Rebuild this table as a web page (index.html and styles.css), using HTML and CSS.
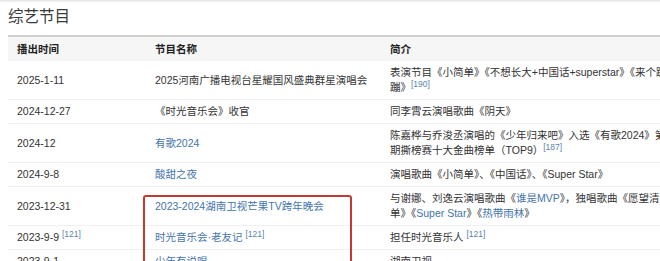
FILE: index.html
```html
<!DOCTYPE html>
<html lang="zh">
<head>
<meta charset="utf-8">
<link rel="stylesheet" href="styles.css">
</head>
<body>
<div class="shadow"></div>
<div class="page">
  <h2 class="title">综艺节目</h2>
  <table class="tbl">
    <colgroup><col class="c1"><col class="c2"><col class="c3"></colgroup>
    <thead>
      <tr><th>播出时间</th><th>节目名称</th><th>简介</th></tr>
    </thead>
    <tbody>
      <tr class="two">
        <td>2025-1-11</td>
        <td>2025河南广播电视台星耀国风盛典群星演唱会</td>
        <td>表演节目《小简单》《不想长大+中国话+superstar》《来个蹦<br>蹦》<sup>[190]</sup></td>
      </tr>
      <tr>
        <td>2024-12-27</td>
        <td>《时光音乐会》收官</td>
        <td>同李霄云演唱歌曲《阴天》</td>
      </tr>
      <tr class="two">
        <td>2024-12</td>
        <td><a>有歌2024</a></td>
        <td>陈嘉桦与乔浚丞演唱的《少年归来吧》入选《有歌2024》第八<br>期撕榜赛十大金曲榜单（TOP9）<sup>[187]</sup></td>
      </tr>
      <tr>
        <td>2024-9-8</td>
        <td><a>酸甜之夜</a></td>
        <td>演唱歌曲《小简单》、《中国话》、《Super Star》</td>
      </tr>
      <tr class="two">
        <td>2023-12-31</td>
        <td><a>2023-2024湖南卫视芒果TV跨年晚会</a></td>
        <td>与谢娜、刘逸云演唱歌曲《<a>谁是MVP</a>》，独唱歌曲《愿望清<br>单》《<a>Super Star</a>》《<a>热带雨林</a>》</td>
      </tr>
      <tr>
        <td>2023-9-9 <sup>[121]</sup></td>
        <td><a>时光音乐会·老友记</a> <sup>[121]</sup></td>
        <td>担任时光音乐人 <sup>[121]</sup></td>
      </tr>
      <tr>
        <td>2023-9-1</td>
        <td><a>少年有说唱</a></td>
        <td>湖南卫视</td>
      </tr>
    </tbody>
  </table>
  <div class="mark"></div>
</div>
</body>
</html>
```

FILE: styles.css
```css
html, body {
  margin: 0;
  padding: 0;
  background: #fff;
}
body {
  width: 660px;
  height: 261px;
  overflow: hidden;
  font-family: "Liberation Sans", Arial, "Noto Sans CJK SC", sans-serif;
  color: #333;
}
.shadow {
  height: 3px;
  background: linear-gradient(#e2e2e2, #fff);
}
.page {
  position: relative;
  padding: 3px 0 0 8px;
}
.title {
  margin: 0 0 7px 0;
  font-size: 15.5px;
  line-height: 22px;
  font-weight: normal;
  color: #3a3a3a;
}
.tbl {
  border-collapse: collapse;
  table-layout: fixed;
  width: 720px;
  border-top: 2px solid #cfcfcf;
  font-size: 10.5px;
  line-height: 15px;
}
.c1 { width: 138px; }
.c2 { width: 235px; }
.c3 { width: 347px; }
.tbl th {
  background: #f6f6f6;
  text-align: left;
  font-weight: bold;
  color: #222;
  padding: 5px 9px 4px;
  height: 14px;
}
.tbl td {
  padding: 4px 9px 4px;
  border-bottom: 1px solid #f0f0f0;
  white-space: nowrap;
  vertical-align: middle;
}
.tbl a {
  color: #4474ad;
}
.tbl sup {
  font-size: 8.5px;
  color: #5b7fb0;
  vertical-align: 4px;
  line-height: 0;
}
.mark {
  position: absolute;
  left: 143px;
  top: 192px;
  width: 205px;
  height: 100px;
  border: 2px solid #c23a30;
  border-radius: 3px;
}
```
